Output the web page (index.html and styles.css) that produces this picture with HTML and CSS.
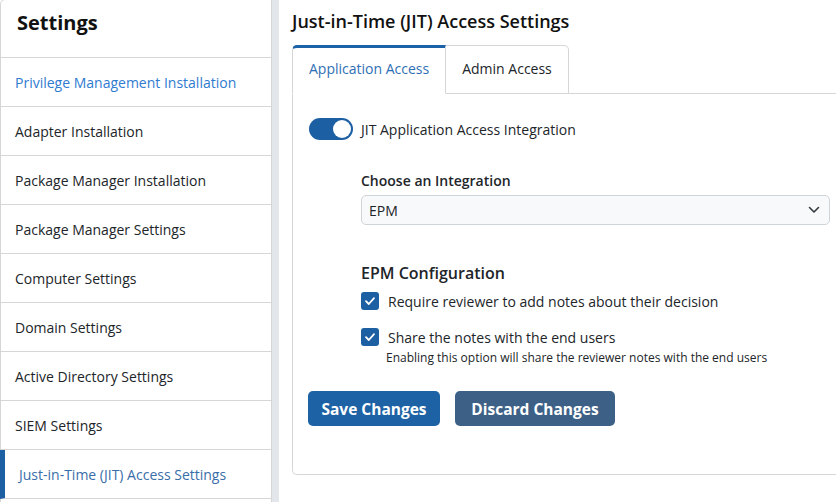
FILE: index.html
```html
<!DOCTYPE html>
<html lang="en">
<head>
<meta charset="utf-8">
<title>Settings</title>
<link rel="stylesheet" href="styles.css">
</head>
<body>
<div class="page">
  <aside class="sidebar">
    <div class="side-head">Settings</div>
    <ul class="side-list">
      <li class="side-item link">Privilege Management Installation</li>
      <li class="side-item">Adapter Installation</li>
      <li class="side-item">Package Manager Installation</li>
      <li class="side-item">Package Manager Settings</li>
      <li class="side-item">Computer Settings</li>
      <li class="side-item">Domain Settings</li>
      <li class="side-item">Active Directory Settings</li>
      <li class="side-item">SIEM Settings</li>
      <li class="side-item active">Just-in-Time (JIT) Access Settings</li>
    </ul>
  </aside>
  <div class="gutter"></div>
  <main class="main">
    <h1 class="title">Just-in-Time (JIT) Access Settings</h1>
    <div class="tabs">
      <div class="tab tab-active">Application Access</div>
      <div class="tab">Admin Access</div>
      <div class="tab-fill"></div>
    </div>
    <section class="card">
      <div class="toggle-row">
        <span class="toggle"><span class="knob"></span></span>
        <span class="toggle-label">JIT Application Access Integration</span>
      </div>
      <div class="form">
        <div class="field-label">Choose an Integration</div>
        <div class="select">
          <span>EPM</span>
          <svg class="chev" width="12" height="8" viewBox="0 0 12 8"><path d="M1.5 1.5 L6 6 L10.5 1.5" fill="none" stroke="#343a40" stroke-width="1.6" stroke-linecap="round" stroke-linejoin="round"/></svg>
        </div>
        <h2 class="sub">EPM Configuration</h2>
        <div class="check-row">
          <span class="check"><svg width="12" height="10" viewBox="0 0 12 10"><path d="M2 5.2 L4.8 8 L10 2.2" fill="none" stroke="#fff" stroke-width="1.8" stroke-linecap="round" stroke-linejoin="round"/></svg></span>
          <span class="check-label">Require reviewer to add notes about their decision</span>
        </div>
        <div class="check-row second">
          <span class="check"><svg width="12" height="10" viewBox="0 0 12 10"><path d="M2 5.2 L4.8 8 L10 2.2" fill="none" stroke="#fff" stroke-width="1.8" stroke-linecap="round" stroke-linejoin="round"/></svg></span>
          <span class="check-label">Share the notes with the end users</span>
        </div>
        <div class="help">Enabling this option will share the reviewer notes with the end users</div>
      </div>
      <div class="buttons">
        <button class="btn btn-save">Save Changes</button>
        <button class="btn btn-discard">Discard Changes</button>
      </div>
    </section>
  </main>
</div>
</body>
</html>
```
FILE: styles.css
```css
* { box-sizing: border-box; }
html, body { margin: 0; padding: 0; background: #fff; }
body {
  font-family: "Open Sans", "Noto Sans", sans-serif;
  color: #212529;
  width: 836px;
  height: 502px;
  overflow: hidden;
}
.page {
  display: flex;
  height: 502px;
}
.sidebar {
  width: 272px;
  flex: none;
  border: 1px solid #d6d6d6;
  border-top-left-radius: 5px;
  margin-top: -1px;
  height: 520px;
  background: #fff;
}
.side-head {
  height: 58px;
  padding: 9px 0 0 16px;
  font-size: 20px;
  font-weight: 700;
  color: #111;
  border-bottom: 1px solid #d6d6d6;
}
.side-list { list-style: none; margin: 0; padding: 0; }
.side-item {
  height: 49px;
  border-bottom: 1px solid #d6d6d6;
  display: flex;
  align-items: center;
  padding-left: 14px;
  font-size: 14px;
  color: #212529;
}
.side-item.link { color: #2f7bd0; }
.side-item.active {
  border-left: 5px solid #1c5fa3;
  margin-left: -1px;
  padding-left: 14px;
  color: #3a6ea8;
}
.gutter {
  width: 7px;
  flex: none;
  background: #e3e6ea;
}
.main {
  flex: 1;
  padding: 0 0 0 13px;
  min-width: 0;
}
.title {
  margin: 0;
  padding-top: 9px;
  height: 45px;
  font-size: 18px;
  font-weight: 600;
  color: #111;
}
.tabs {
  display: flex;
  height: 49px;
}
.tab {
  height: 49px;
  padding: 0 16px 3px;
  display: flex;
  align-items: center;
  font-size: 14px;
  color: #212529;
  border: 1px solid #d6d6d6;
  border-left: none;
  border-top-right-radius: 5px;
}
.tab-active {
  border-left: 1px solid #d6d6d6;
  border-top: 3px solid #1c62a8;
  border-bottom-color: #fff;
  border-radius: 5px 0 0 0;
  color: #2f6fb4;
  padding-bottom: 4px;
}
.tab-fill {
  flex: 1;
  border-bottom: 1px solid #d6d6d6;
}
.card {
  border: 1px solid #d6d6d6;
  border-top: none;
  border-right: none;
  border-bottom-left-radius: 5px;
  height: 381px;
  padding: 24px 0 0 16px;
}
.toggle-row {
  display: flex;
  align-items: center;
  height: 22px;
}
.toggle {
  width: 44px;
  height: 22px;
  border-radius: 11px;
  background: #1c5fa3;
  position: relative;
  flex: none;
}
.knob {
  position: absolute;
  right: 2px;
  top: 2px;
  width: 18px;
  height: 18px;
  border-radius: 50%;
  background: #fff;
}
.toggle-label {
  margin-left: 8px;
  font-size: 14px;
}
.form {
  margin-left: 52px;
  padding-top: 31px;
}
.field-label {
  font-size: 14px;
  font-weight: 600;
  line-height: 20px;
}
.select {
  margin-top: 4px;
  margin-right: 6px;
  height: 30px;
  border: 1px solid #cfd4d9;
  border-radius: 5px;
  background: #f8f9fa;
  display: flex;
  align-items: center;
  justify-content: space-between;
  padding: 0 9px 0 7px;
  font-size: 14px;
}
.sub {
  margin: 37px 0 0 0;
  font-size: 16px;
  font-weight: 600;
  line-height: 22px;
}
.check-row {
  display: flex;
  align-items: center;
  margin-top: 7px;
  height: 20px;
}
.check-row.second { margin-top: 16px; }
.check {
  width: 18px;
  height: 18px;
  border-radius: 3px;
  background: #1c5fa3;
  display: flex;
  align-items: center;
  justify-content: center;
  flex: none;
}
.check-label {
  margin-left: 9px;
  font-size: 14px;
}
.help {
  margin-left: 25px;
  font-size: 12px;
  line-height: 16px;
  margin-top: 3px;
}
.buttons {
  display: flex;
  gap: 15px;
  margin-top: 25px;
  margin-left: -1px;
}
.btn {
  height: 35px;
  border: none;
  border-radius: 5px;
  color: #fff;
  font-family: "Open Sans", "Noto Sans", sans-serif;
  font-size: 15.5px;
  font-weight: 700;
  padding: 0;
  white-space: nowrap;
  text-align: center;
}
.btn-save { background: #1c62a5; width: 132px; }
.btn-discard { background: #3d6186; width: 160px; }
```
